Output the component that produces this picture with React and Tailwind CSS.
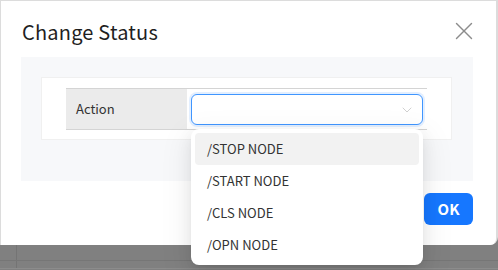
import { X, ChevronDown } from 'lucide-react'

const OPTIONS = ['/STOP NODE', '/START NODE', '/CLS NODE', '/OPN NODE']

export default function App() {
    return (
        <div className="relative w-[498px] h-[270px] overflow-hidden bg-[#808080] font-['Noto_Sans_CJK_KR','Noto_Sans',sans-serif]">

            {/* Backdrop table behind the modal */}
            <div className="absolute inset-x-0 top-[245px] flex flex-col">
                <div className="flex h-[15px]">
                    <div className="w-[17px] border-r border-[#747474]"></div>
                    <div className="flex-1"></div>
                </div>
                <div className="flex h-[8px] border-t border-[#767676]">
                    <div className="w-[17px] border-r border-[#747474]"></div>
                    <div className="flex-1"></div>
                </div>
                <div className="h-px bg-[#8c8c8c]"></div>
            </div>

            {/* Modal */}
            <div className="absolute left-0 top-0 w-[498px] h-[245px] bg-[#dcdcdc] pl-px pr-[2px] pt-px rounded-br-lg">
                <div className="h-full bg-white rounded-br-md pl-5 pr-[23px] flex flex-col">
                    {/* Header */}
                    <div className="flex items-center justify-between h-[56px] pt-px">
                        <h2 className="ml-px mt-[5px] text-[20px] font-normal text-[#1f1f1f] tracking-[0.2px]">Change Status</h2>
                        <button className="-mr-[6px] mt-[3px] text-[#8c8c8c]">
                            <X size={30} strokeWidth={1.1} />
                        </button>
                    </div>

                    {/* Body */}
                    <div className="bg-[#f7f8fa] h-[124px] pl-5 pr-[21px] pt-5">
                        <div className="bg-white border border-[#f0f0f0] h-[63px] pl-6 pr-6 pt-[10px]">
                            <div className="flex h-[42px] border-y border-[#d4d4d4]">
                                <div className="w-[121px] bg-[#ebebeb] flex items-center pl-[10px] text-[13px] text-[#333]">
                                    Action
                                </div>
                                <div className="flex-1 relative px-1 pt-[5px]">
                                    <div className="h-[31px] rounded-md border border-[#4096ff] ring-2 ring-[#4096ff]/15 bg-white flex items-center justify-end pr-[7px]">
                                        <ChevronDown size={16} strokeWidth={1.1} className="text-[#bfbfbf]" />
                                    </div>

                                    {/* Dropdown menu */}
                                    <div className="absolute left-1 right-1 top-[40px] z-10 bg-white rounded-lg p-1 shadow-[0_6px_16px_0_rgba(0,0,0,0.08),0_3px_6px_-4px_rgba(0,0,0,0.12),0_9px_28px_8px_rgba(0,0,0,0.05)]">
                                        {OPTIONS.map((opt, i) => (
                                            <div
                                                key={opt}
                                                className={`h-[32px] flex items-center px-3 rounded text-[13px] text-[#333] ${i === 0 ? 'bg-[#f2f2f2]' : ''}`}
                                            >
                                                {opt}
                                            </div>
                                        ))}
                                    </div>
                                </div>
                            </div>
                        </div>
                    </div>

                    {/* Footer */}
                    <div className="flex justify-end pt-3">
                        <button className="w-[49px] h-[32px] rounded-md bg-[#1677ff] text-white text-[15px] font-bold">
                            OK
                        </button>
                    </div>
                </div>
            </div>
        </div>
    )
}
